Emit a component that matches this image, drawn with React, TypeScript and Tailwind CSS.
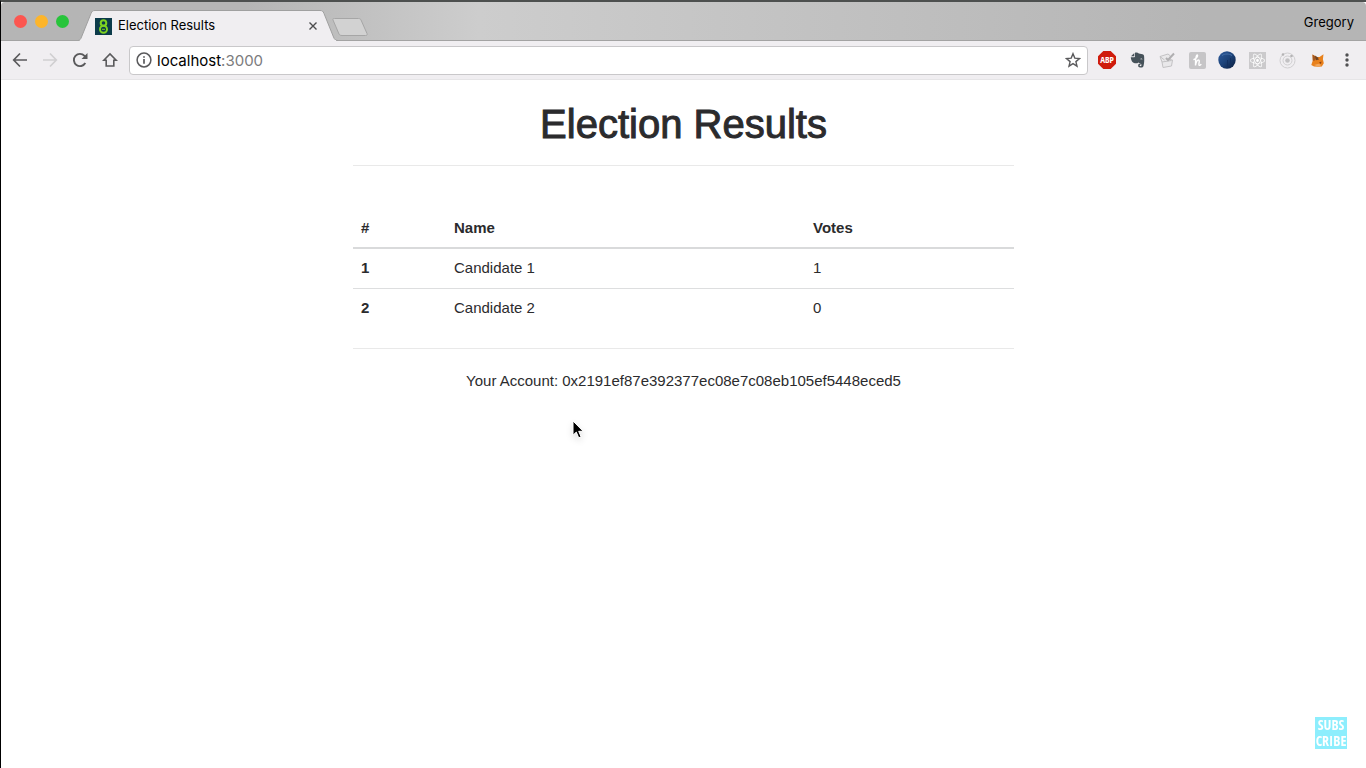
import { SiReact } from "react-icons/si";

const candidates = [
  { id: 1, name: "Candidate 1", voteCount: 1 },
  { id: 2, name: "Candidate 2", voteCount: 0 },
];

const account = "0x2191ef87e392377ec08e7c08eb105ef5448eced5";

const toolbarButton = "flex h-7 w-[30px] shrink-0 items-center justify-center";

const extensions = [
  {
    title: "Adblock Plus",
    icon: (
      <svg width="18" height="18" viewBox="0 0 18 18">
        <path d="M5.3 0h7.4L18 5.3v7.4L12.7 18H5.3L0 12.7V5.3z" fill="#cf1b0c" />
        <text
          x="9"
          y="12"
          textAnchor="middle"
          fill="#fff"
          className="font-['Open_Sans_Condensed','Liberation_Sans',sans-serif] text-[9px] font-bold"
        >
          ABP
        </text>
      </svg>
    ),
  },
  {
    title: "Evernote",
    icon: (
      <svg width="15" height="16" viewBox="0 0 15 16" fill="#46525a">
        <path d="M1 4.300L4.300 1v3.300z" />
        <path d="M5 .8C6.500.3 8 .6 8.800 1.600l3.700.7c1 .2 1.500 1 1.600 2 .3 3.500.2 7-.6 9.700-.4 1.300-1.500 1.700-3.300 1.500-1.700-.2-2.200-1-2-2.300.1-1 .8-1.500 2.300-1.400v1.300c-.6-.1-.9.100-.9.500 0 .5.500.6 1.200.5.800-.1.800-1.600.300-2.200-.5-.6-2-.6-2.700-1.500-.6.8-1.900 1-3.400.8C2.200 10.800 1 8 .8 5.200h3.400c.6 0 .8-.3.8-.9z" />
        <path d="M10.200 7.200c.1-1 2-1 2.200.3-.7-.3-1.400-.3-2.200-.3z" fill="#f0eef1" />
      </svg>
    ),
  },
  {
    title: "Notes",
    icon: (
      <svg width="16" height="16" viewBox="0 0 16 16" fill="none" stroke="#c3c2c4">
        <path d="M1 4.500l8-2.500 2.500 2-1 3.500 3 .5-1 6-8.500 1.500L3 10z" fill="#e9e8ea" />
        <path d="M1 4.500L5.500 8M3 10l9.500-1.500" />
        <path d="M7 6l2 2L15 1.500" stroke="#b0afb1" strokeWidth="2" />
      </svg>
    ),
  },
  {
    title: "Honey",
    icon: (
      <svg width="17" height="17" viewBox="0 0 17 17">
        <rect width="17" height="17" rx="2" fill="#c6c5c7" />
        <path
          d="M5 7.500C8 6.500 9.500 3 8 3S6.500 8 6.500 13.500C7 10.500 8.200 8 9.500 8s.6 2.500.4 4 .8 1.800 2 .5"
          fill="none"
          stroke="#fff"
          strokeWidth="1.400"
          strokeLinecap="round"
        />
      </svg>
    ),
  },
  {
    title: "Globe",
    icon: (
      <svg width="18" height="18" viewBox="0 0 18 18">
        <defs>
          <linearGradient id="globe" x1="0" y1="0" x2="1" y2="1">
            <stop offset="0" stopColor="#2e5c9e" />
            <stop offset="0.5" stopColor="#1c4278" />
            <stop offset="1" stopColor="#0a1c3c" />
          </linearGradient>
        </defs>
        <circle cx="9" cy="9" r="8.700" fill="url(#globe)" />
        <path d="M4 4.500C7 2.500 11 2.500 14 4.500" stroke="#456fa8" fill="none" />
        <path d="M9.500 9v7M12.500 7v6" stroke="#123060" />
      </svg>
    ),
  },
  {
    title: "React Developer Tools",
    icon: (
      <span className="flex h-[17px] w-[17px] items-center justify-center bg-[#cbcacc]">
        <SiReact className="h-[15px] w-[15px] text-white" />
      </span>
    ),
  },
  {
    title: "Orbit",
    icon: (
      <svg width="17" height="17" viewBox="0 0 17 17" fill="none" stroke="#d0cfd1">
        <circle cx="8.500" cy="8.500" r="7.500" />
        <circle cx="8.500" cy="8.500" r="4.500" />
        <circle cx="8.500" cy="8.500" r="2.300" fill="#c2c1c3" stroke="none" />
        <circle cx="4" cy="2.500" r="1.300" fill="#b4b3b5" stroke="none" />
        <circle cx="12.500" cy="4" r="1.300" fill="#b4b3b5" stroke="none" />
      </svg>
    ),
  },
  {
    title: "MetaMask",
    icon: (
      <svg width="13" height="13" viewBox="0 0 13 13">
        <path d="M1.500.5l4 2.500h3L12.500.3l-.6 5 .9 4-2 3.200-3.300.3-4.500-.4L.3 11l1.500-4.500z" fill="#e8811c" />
        <path d="M1.500.5l4 2.500-1.500 3.500-2.200.3z" fill="#a4581f" />
        <path d="M4 1.500l2.500 1.800L8 5.500l-3 .8z" fill="#6e4323" />
        <path d="M8 8.500l2.500-1-.6 2.500z" fill="#8a3f12" />
        <path d="M3 11l4.500-1.200 3 1.200-3 1.700z" fill="#f2a65b" />
      </svg>
    ),
  },
];

const TabStrip = () => {
  return (
    <div className="flex h-[39px] items-end rounded-t-[4px] border-b border-[#a3a3a3] bg-linear-to-r from-[#b5b5b5] from-18% via-[#cdcdcd] via-35% to-[#b5b5b5] to-88% font-[Inter,sans-serif] text-[13px] text-black">
      <div className="flex h-full items-center gap-2 pl-[13px]">
        <button aria-label="Close window" className="h-[13px] w-[13px] rounded-full bg-[#fc5650]" />
        <button aria-label="Minimize window" className="h-[13px] w-[13px] rounded-full bg-[#fdb52b]" />
        <button aria-label="Zoom window" className="h-[13px] w-[13px] rounded-full bg-[#27c43b]" />
      </div>

      {/* Active tab */}
      <div className="relative -mb-px ml-[9px] flex h-[31px] w-[260px] items-center px-[17px] pt-px">
        <svg className="absolute inset-0" width="260" height="31" viewBox="0 0 260 31">
          <path
            d="M0 30.500C2 30 2.500 29.500 3.500 27L13 3.500C14 1 15 .5 17 .5h225c2 0 3 .5 4 3L255.500 27c1 2.500 2 3.500 4.500 3.500"
            fill="#f0eef1"
            stroke="#a0a0a0"
          />
          <path d="M2 30.500h256" stroke="#f0eef1" />
        </svg>
        <svg className="relative shrink-0" width="17" height="17" viewBox="0 0 17 17">
          <rect width="17" height="17" fill="#0c3b4a" />
          <g fill="none" stroke="#7ed321" strokeWidth="2">
            <circle cx="8.500" cy="5" r="2.800" />
            <circle cx="8.500" cy="11.300" r="3.500" />
          </g>
          <path d="M7 11.300h3" stroke="#7ed321" />
        </svg>
        <span className="relative ml-[6px] grow">Election Results</span>
        <button aria-label="Close tab" className="relative flex h-4 w-4 items-center justify-center">
          <svg width="8" height="8" viewBox="0 0 8 8" stroke="#4c4c4e" strokeWidth="1.400">
            <path d="M.5.5l7 7M7.500.5l-7 7" />
          </svg>
        </button>
      </div>

      <button aria-label="New tab" className="mb-1 -ml-[6px]">
        <svg width="36" height="18" viewBox="0 0 36 18">
          <path
            d="M2.500.5h24c1.500 0 2 .5 2.500 1.500l6 13.500c.5 1.200 0 2-1.500 2H10c-1.500 0-2.500-.5-3-1.500L1 2C.500 1 1 .5 2.500.5z"
            fill="#d2d2d2"
            stroke="#a6a6a6"
          />
        </svg>
      </button>

      <button className="ml-auto self-center pt-1 pr-3">Gregory</button>
    </div>
  );
};

const Toolbar = () => {
  return (
    <div className="flex h-[39px] items-center border-b border-[#e6e5e7] bg-[#f0eef1] px-1 font-[Inter,sans-serif]">
      <button aria-label="Back" className={toolbarButton}>
        <svg width="16" height="16" viewBox="0 0 16 16" fill="none" stroke="#5a5a5c" strokeWidth="1.700">
          <path d="M15 8H2M8 1.500L1.700 8 8 14.500" />
        </svg>
      </button>
      <button aria-label="Forward" className={toolbarButton} disabled>
        <svg width="16" height="16" viewBox="0 0 16 16" fill="none" stroke="#d0cfd1" strokeWidth="1.700">
          <path d="M1 8h13M8 1.500L14.300 8 8 14.500" />
        </svg>
      </button>
      <button aria-label="Reload" className={toolbarButton}>
        <svg width="16" height="16" viewBox="0 0 16 16" fill="none" stroke="#5a5a5c" strokeWidth="1.900">
          <path d="M13.300 11A6.100 6.100 0 1 1 12.500 3.900L13.500 5" />
          <path d="M15.500 1v6h-6z" fill="#5a5a5c" stroke="none" />
        </svg>
      </button>
      <button aria-label="Home" className={toolbarButton}>
        <svg width="16" height="16" viewBox="0 0 16 16" fill="none" stroke="#5a5a5c" strokeWidth="1.600">
          <path d="M1.800 8.300L8 2l6.200 6.300h-2.400V14H4.200V8.300z" />
        </svg>
      </button>

      <div className="mx-1 flex h-[29px] grow items-center rounded-[4px] border border-[#c9c8ca] bg-white px-[6px]">
        <svg width="16" height="16" viewBox="0 0 16 16" fill="none" stroke="#5a5a5c" strokeWidth="1.500">
          <circle cx="8" cy="8" r="6.900" />
          <path d="M8 7v4.700M8 4.200v1.600" strokeWidth="1.700" />
        </svg>
        <a href="http://localhost:3000" className="ml-[5px] grow pt-px text-[15px] leading-5 text-black">
          localhost<span className="text-[#7b7b7d]">:3000</span>
        </a>
        <button aria-label="Bookmark this page">
          <svg width="16" height="16" viewBox="0 0 16 16" fill="none" stroke="#5a5a5c" strokeWidth="1.400">
            <path d="M8 1.700l1.800 4.400 4.700.4-3.600 3.100 1.100 4.600L8 11.700l-4 2.500 1.100-4.600L1.500 6.500l4.700-.4z" />
          </svg>
        </button>
      </div>

      {extensions.map((extension) => (
        <button key={extension.title} aria-label={extension.title} className={toolbarButton}>
          {extension.icon}
        </button>
      ))}
      <button aria-label="Menu" className={toolbarButton}>
        <svg width="4" height="14" viewBox="0 0 4 14" fill="#505052">
          <circle cx="2" cy="2" r="1.700" />
          <circle cx="2" cy="7" r="1.700" />
          <circle cx="2" cy="12" r="1.700" />
        </svg>
      </button>
    </div>
  );
};

const ElectionResults = () => {
  return (
    <main className="mx-auto w-full max-w-[661px] pt-5 font-['Liberation_Sans',Arial,sans-serif] text-[15px] leading-6 text-[#2b2b2d]">
      <h1 className="text-center text-[40px] leading-[48px] [-webkit-text-stroke:1px_#2b2b2d]">
        Election Results
      </h1>
      <hr className="mt-[17px] border-[#e9e9e9]" />
      <table className="mt-[42px] w-full table-fixed text-left">
        <thead>
          <tr className="border-b-2 border-[#d9dadb]">
            <th className="w-[93px] px-2 pt-2 pb-[7px]">#</th>
            <th className="w-[359px] px-2 pt-2 pb-[7px]">Name</th>
            <th className="px-2 pt-2 pb-[7px]">Votes</th>
          </tr>
        </thead>
        <tbody>
          {candidates.map((candidate) => (
            <tr key={candidate.id} className="border-b border-[#dddedf] last:border-b-0">
              <th className="px-2 pt-[7px] pb-2">{candidate.id}</th>
              <td className="px-2 pt-[7px] pb-2">{candidate.name}</td>
              <td className="px-2 pt-[7px] pb-2">{candidate.voteCount}</td>
            </tr>
          ))}
        </tbody>
      </table>
      <hr className="mt-5 border-[#e9e9e9]" />
      <p className="mt-5 text-center">Your Account: {account}</p>
    </main>
  );
};

const App = () => {
  return (
    <div className="min-h-screen border-l border-t-2 border-l-black border-t-[#4d504f] bg-white">
      <header>
        <TabStrip />
        <Toolbar />
      </header>
      <ElectionResults />

      {/* Mouse pointer */}
      <svg
        className="absolute left-[571px] top-[419px] drop-shadow-md"
        width="14"
        height="22"
        viewBox="0 0 14 22"
      >
        <path
          d="M2 2v14.200l3.300-3.100 2.400 5.700 2.400-1-2.400-5.500h4.500z"
          fill="#000"
          stroke="#fff"
          strokeWidth="1"
        />
      </svg>

      <button className="fixed bottom-[19px] right-[19px] h-8 w-8 bg-[#8deefd] text-center font-['Open_Sans_Condensed',Roboto,sans-serif] text-[14px] font-bold leading-4 text-white">
        SUBS
        <br />
        CRIBE
      </button>
    </div>
  );
};

export default App;
